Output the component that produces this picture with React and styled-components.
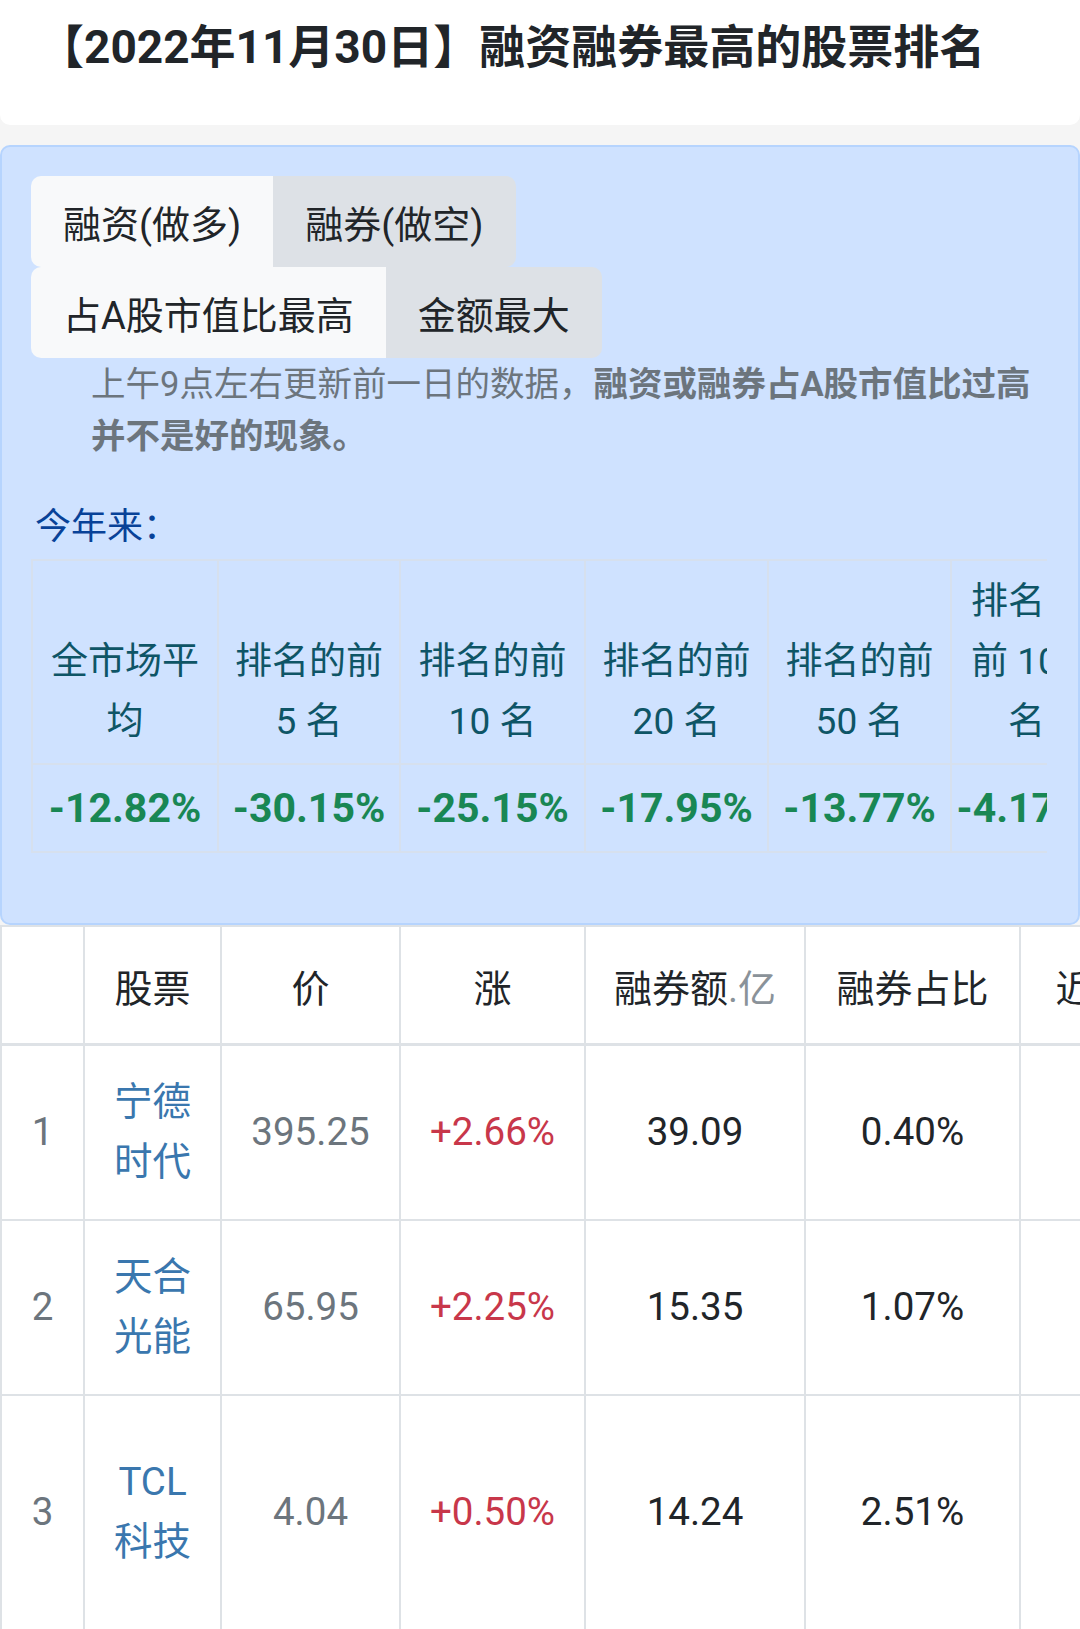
import React from 'react';
import styled, { createGlobalStyle } from 'styled-components';

const Global = createGlobalStyle`
  body {
    margin: 0;
    background: #f5f5f5;
    font-family: Roboto, "Noto Sans CJK SC", sans-serif;
    color: #212529;
  }
`;

const Page = styled.div`
  width: 1080px;
  overflow: hidden;
`;

const Header = styled.div`
  background: #fff;
  height: 125px;
  border-radius: 0 0 10px 10px;
  display: flex;
  align-items: center;
  padding-left: 38px;
  padding-bottom: 39px;
  box-sizing: border-box;
`;

const Title = styled.h1`
  margin: 0;
  font-size: 46px;
  font-weight: 700;
  color: #212529;
  white-space: nowrap;
`;

const Panel = styled.div`
  margin-top: 20px;
  background: #cfe2ff;
  border: 2px solid #b6d4fe;
  border-radius: 10px;
  padding: 29px 31px 70px 29px;
  height: 780px;
  box-sizing: border-box;
`;

const TabRow = styled.div`
  display: flex;
  height: 91px;
`;

const Tab = styled.div`
  display: flex;
  align-items: center;
  padding: 0 32px;
  font-size: 38px;
  color: #212529;
  background: ${(p) => (p.$active ? '#f8f9fa' : '#dde1e6')};
  border-radius: ${(p) => (p.$first ? '10px 0 0 10px' : '0 10px 10px 0')};
  white-space: nowrap;
`;

const Note = styled.p`
  margin: 0 0 0 60px;
  font-size: 34.5px;
  line-height: 52px;
  color: #6c757d;
`;

const Strong = styled.b`
  font-weight: 700;
`;

const YearLabel = styled.div`
  margin-top: 38px;
  font-size: 36px;
  line-height: 54px;
  color: #084298;
  padding-left: 4px;
`;

const Scroll = styled.div`
  overflow: hidden;
  margin-top: 5px;
`;

const InnerTable = styled.table`
  border-collapse: collapse;
  table-layout: fixed;
  width: 1059px;
`;

const InnerHead = styled.th`
  border: 2px solid #d6e0ee;
  padding: 11px 4px;
  font-size: 37px;
  line-height: 60px;
  font-weight: 400;
  color: #0e5566;
  text-align: center;
  vertical-align: bottom;
`;

const Line = styled.span`
  display: block;
  text-align: ${(p) => (p.$indent !== undefined ? 'left' : 'center')};
  padding-left: ${(p) => p.$indent || 0}px;
  white-space: nowrap;
`;

const InnerValue = styled.td`
  border: 2px solid #d6e0ee;
  height: 86px;
  padding: 0;
  font-size: 41px;
  font-weight: 700;
  color: #198754;
  text-align: center;
  white-space: nowrap;
`;

const MainWrap = styled.div`
  overflow: hidden;
  background: #fff;
`;

const MainTable = styled.table`
  border-collapse: collapse;
  table-layout: fixed;
  width: 1280px;
  background: #fff;
`;

const Th = styled.th`
  border: 2px solid #dee2e6;
  border-bottom: 3px solid #dee2e6;
  height: 116px;
  padding: 0 8px;
  font-size: 38px;
  font-weight: 400;
  color: #212529;
  text-align: center;
  vertical-align: middle;
  white-space: nowrap;
`;

const Unit = styled.span`
  color: #8a9299;
`;

const Row = styled.tr`
  height: ${(p) => p.$h}px;
`;

const Td = styled.td`
  border: 2px solid #dee2e6;
  padding: 0 8px;
  font-size: 38.5px;
  line-height: 60px;
  text-align: center;
  vertical-align: middle;
  color: ${(p) => p.$color || '#212529'};
`;

const NameCell = styled(Td)`
  color: #3a77ae;
  padding: 0 20px;
`;

const tabsTop = [
  { label: '融资(做多)', active: true },
  { label: '融券(做空)', active: false },
];
const tabsBottom = [
  { label: '占A股市值比最高', active: true },
  { label: '金额最大', active: false },
];

const innerCols = [186, 182, 185, 183, 183, 140];
const summary = [
  { head: ['全市场平', '均'], value: '-12.82%' },
  { head: ['排名的前', '5 名'], value: '-30.15%' },
  { head: ['排名的前', '10 名'], value: '-25.15%' },
  { head: ['排名的前', '20 名'], value: '-17.95%' },
  { head: ['排名的前', '50 名'], value: '-13.77%' },
];

const mainCols = [83, 137, 179, 185, 220, 215, 261];
const rows = [
  { idx: 1, name: ['宁德', '时代'], price: '395.25', chg: '+2.66%', amt: '39.09', pct: '0.40%', h: 175 },
  { idx: 2, name: ['天合', '光能'], price: '65.95', chg: '+2.25%', amt: '15.35', pct: '1.07%', h: 175 },
  { idx: 3, name: ['TCL', '科技'], price: '4.04', chg: '+0.50%', amt: '14.24', pct: '2.51%', h: 235 },
];

export default function App() {
  return (
    <Page>
      <Global />
      <Header>
        <Title>【2022年11月30日】融资融券最高的股票排名</Title>
      </Header>

      <Panel>
        <TabRow>
          {tabsTop.map((t, i) => (
            <Tab key={t.label} $active={t.active} $first={i === 0}>{t.label}</Tab>
          ))}
        </TabRow>
        <TabRow>
          {tabsBottom.map((t, i) => (
            <Tab key={t.label} $active={t.active} $first={i === 0}>{t.label}</Tab>
          ))}
        </TabRow>
        <Note>
          上午9点左右更新前一日的数据，<Strong>融资或融券占A股市值比过高并不是好的现象。</Strong>
        </Note>
        <YearLabel>今年来：</YearLabel>
        <Scroll>
          <InnerTable>
            <colgroup>
              {innerCols.map((w, i) => <col key={i} style={{ width: w }} />)}
            </colgroup>
            <thead>
              <tr>
                {summary.map((s) => (
                  <InnerHead key={s.value}>
                    {s.head.map((l) => <Line key={l}>{l}</Line>)}
                  </InnerHead>
                ))}
                <InnerHead>
                  <Line $indent={15}>排名</Line>
                  <Line $indent={15}>前 100</Line>
                  <Line $indent={52}>名</Line>
                </InnerHead>
              </tr>
            </thead>
            <tbody>
              <tr>
                {summary.map((s) => <InnerValue key={s.value}>{s.value}</InnerValue>)}
                <InnerValue>-4.17%</InnerValue>
              </tr>
            </tbody>
          </InnerTable>
        </Scroll>
      </Panel>

      <MainWrap>
        <MainTable>
          <colgroup>
            {mainCols.map((w, i) => <col key={i} style={{ width: w }} />)}
          </colgroup>
          <thead>
            <tr>
              <Th></Th>
              <Th>股票</Th>
              <Th>价</Th>
              <Th>涨</Th>
              <Th>融券额<Unit>.亿</Unit></Th>
              <Th>融券占比</Th>
              <Th>近一年涨跌</Th>
            </tr>
          </thead>
          <tbody>
            {rows.map((r) => (
              <Row key={r.idx} $h={r.h}>
                <Td $color="#6c757d">{r.idx}</Td>
                <NameCell>
                  {r.name.map((n) => <Line key={n}>{n}</Line>)}
                </NameCell>
                <Td $color="#6c757d">{r.price}</Td>
                <Td $color="#c8374a">{r.chg}</Td>
                <Td>{r.amt}</Td>
                <Td>{r.pct}</Td>
                <Td></Td>
              </Row>
            ))}
          </tbody>
        </MainTable>
      </MainWrap>
    </Page>
  );
}
